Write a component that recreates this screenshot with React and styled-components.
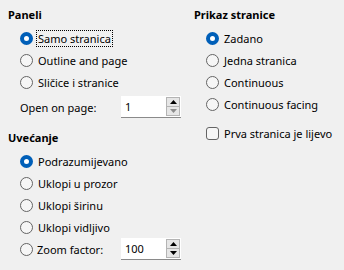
import React from "react";
import styled, { createGlobalStyle, css } from "styled-components";

const Global = createGlobalStyle`
  html, body { margin: 0; padding: 0; background: #f0f0f0; }
  body { width: 344px; height: 270px; overflow: hidden; font-family: "Noto Sans", "Liberation Sans", sans-serif; font-size: 11px; color: #000; }
`;

const Dialog = styled.div`
  display: grid;
  grid-template-columns: 186px 1fr;
  padding: 7px 0 0 8px;
  background: #f0f0f0;
  height: 270px;
  box-sizing: border-box;
`;

const Column = styled.div`
  display: flex;
  flex-direction: column;
`;

const Heading = styled.div`
  font-weight: 700;
  font-size: 11px;
  line-height: 16px;
  height: 16px;
  margin-top: ${(p) => p.$mt || 0}px;
  margin-bottom: 4px;
`;

const Row = styled.div`
  display: flex;
  align-items: center;
  height: 22px;
  padding-left: 12px;
  margin-top: ${(p) => p.$mt || 0}px;
  white-space: nowrap;
`;

const RadioMark = styled.span`
  width: 13px;
  height: 13px;
  box-sizing: border-box;
  border-radius: 50%;
  flex: none;
  ${(p) =>
    p.$checked
      ? css`
          border: 4px solid #005fb8;
          background: #fff;
        `
      : css`
          border: 1px solid #646464;
          background: #f6f6f6;
        `}
`;

const CheckMark = styled.span`
  width: 13px;
  height: 13px;
  box-sizing: border-box;
  border-radius: 3px;
  border: 1px solid #646464;
  background: #f6f6f6;
  flex: none;
`;

const Label = styled.span`
  margin-left: 3px;
  padding: 0 1px;
  line-height: 15px;
  border: 1px dotted ${(p) => (p.$focus ? "#000" : "transparent")};
`;

const FieldLabel = styled.span`
  width: ${(p) => p.$w}px;
  margin-left: ${(p) => p.$ml || 0}px;
  flex: none;
  line-height: 15px;
`;

const Spin = styled.div`
  display: flex;
  align-items: stretch;
  width: 60px;
  height: 22px;
  box-sizing: border-box;
  border-bottom: 1px solid #8a8a8a;
  background: #fff;
`;

const SpinInput = styled.div`
  flex: 1;
  display: flex;
  align-items: center;
  padding-left: 4px;
  font-size: 11px;
`;

const SpinButtons = styled.div`
  display: flex;
  flex-direction: column;
  width: 14px;
  padding: 1px 0 1px 0;
  margin-right: 1px;
`;

const SpinButton = styled.div`
  flex: 1;
  display: flex;
  align-items: center;
  justify-content: center;
  border: 1px solid #b4b4b4;
  background: #e6e6e6;
  & + & { border-top: none; }
`;

const Arrow = ({ up, color }) => (
  <svg width="7" height="4" viewBox="0 0 7 4">
    {up ? <polygon points="0,4 7,4 3.5,0" fill={color} /> : <polygon points="0,0 7,0 3.5,4" fill={color} />}
  </svg>
);

const SpinBox = ({ value, downDisabled }) => (
  <Spin>
    <SpinInput>{value}</SpinInput>
    <SpinButtons>
      <SpinButton><Arrow up color="#000" /></SpinButton>
      <SpinButton><Arrow color={downDisabled ? "#8c8c8c" : "#000"} /></SpinButton>
    </SpinButtons>
  </Spin>
);

const Radio = ({ checked, focus, children, mt }) => (
  <Row $mt={mt}>
    <RadioMark $checked={checked} />
    <Label $focus={focus}>{children}</Label>
  </Row>
);

export default function App() {
  return (
    <>
      <Global />
      <Dialog>
        <Column>
          <Heading>Paneli</Heading>
          <Radio checked focus>Samo stranica</Radio>
          <Radio>Outline and page</Radio>
          <Radio>Sličice i stranice</Radio>
          <Row $mt={3}>
            <FieldLabel $w={101}>Open on page:</FieldLabel>
            <SpinBox value="1" downDisabled />
          </Row>
          <Heading $mt={12}>Uvećanje</Heading>
          <Radio checked>Podrazumijevano</Radio>
          <Radio>Uklopi u prozor</Radio>
          <Radio>Uklopi širinu</Radio>
          <Radio>Uklopi vidljivo</Radio>
          <Row>
            <RadioMark />
            <FieldLabel $w={84} $ml={4}>Zoom factor:</FieldLabel>
            <SpinBox value="100" />
          </Row>
        </Column>
        <Column>
          <Heading>Prikaz stranice</Heading>
          <Radio checked>Zadano</Radio>
          <Radio>Jedna stranica</Radio>
          <Radio>Continuous</Radio>
          <Radio>Continuous facing</Radio>
          <Row $mt={7}>
            <CheckMark />
            <Label>Prva stranica je lijevo</Label>
          </Row>
        </Column>
      </Dialog>
    </>
  );
}
